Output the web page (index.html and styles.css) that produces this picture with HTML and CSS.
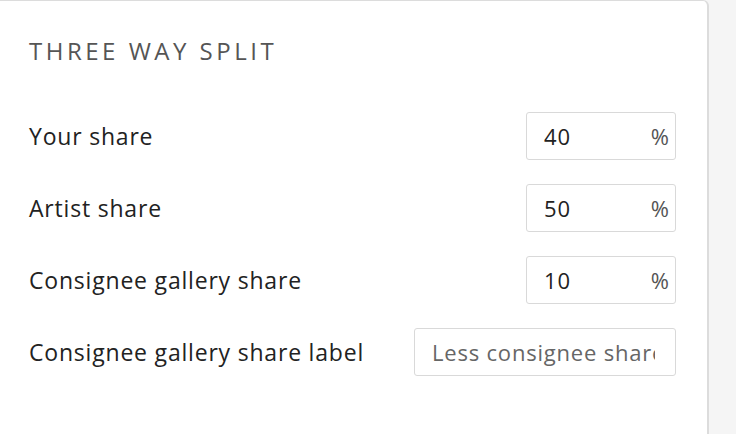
FILE: index.html
```html
<!DOCTYPE html>
<html lang="en">
<head>
<meta charset="utf-8">
<title>Three way split</title>
<link rel="stylesheet" href="styles.css">
</head>
<body>
<div class="page">
  <section class="card">
    <h2 class="card-title">THREE WAY SPLIT</h2>
    <div class="rows">
      <div class="row">
        <label class="row-label">Your share</label>
        <div class="pct-input"><span class="pct-value">40</span><span class="pct-sign">%</span></div>
      </div>
      <div class="row">
        <label class="row-label">Artist share</label>
        <div class="pct-input"><span class="pct-value">50</span><span class="pct-sign">%</span></div>
      </div>
      <div class="row">
        <label class="row-label">Consignee gallery share</label>
        <div class="pct-input"><span class="pct-value">10</span><span class="pct-sign">%</span></div>
      </div>
      <div class="row">
        <label class="row-label">Consignee gallery share label</label>
        <div class="text-input"><span class="placeholder">Less consignee share</span></div>
      </div>
    </div>
  </section>
</div>
</body>
</html>
```

FILE: styles.css
```css
html, body {
  margin: 0;
  padding: 0;
  background: #f5f5f5;
  height: 100%;
}

.page {
  display: flex;
  height: 100%;
  font-family: "Open Sans", "Noto Sans", sans-serif;
  color: #222;
}

.card {
  background: #fff;
  border-top: 1px solid #dcdcdc;
  border-right: 2px solid #dcdcdc;
  border-top-right-radius: 6px;
  padding: 0 31px 0 29px;
  box-sizing: content-box;
  width: 647px;
}

.card-title {
  margin: 34px 0 0;
  font-size: 24px;
  line-height: 32px;
  font-weight: 400;
  letter-spacing: 3.5px;
  color: #555;
}

.rows {
  margin-top: 45px;
  display: flex;
  flex-direction: column;
  gap: 24px;
}

.row {
  display: flex;
  align-items: center;
  justify-content: space-between;
  height: 48px;
}

.row-label {
  font-size: 23px;
  letter-spacing: 0.8px;
  color: #222;
}

.pct-input,
.text-input {
  box-sizing: border-box;
  height: 48px;
  border: 1px solid #d9d9d9;
  border-radius: 3px;
  display: flex;
  align-items: center;
  font-size: 22px;
  letter-spacing: 0.8px;
}

.pct-input {
  width: 150px;
  padding: 0 6px 0 17px;
  justify-content: space-between;
}

.pct-value {
  color: #222;
}

.pct-sign {
  color: #555;
  letter-spacing: 0;
}

.text-input {
  width: 262px;
  padding: 0 20px 0 17px;
  overflow: hidden;
  white-space: nowrap;
}

.placeholder {
  color: #666;
  overflow: hidden;
}
```
